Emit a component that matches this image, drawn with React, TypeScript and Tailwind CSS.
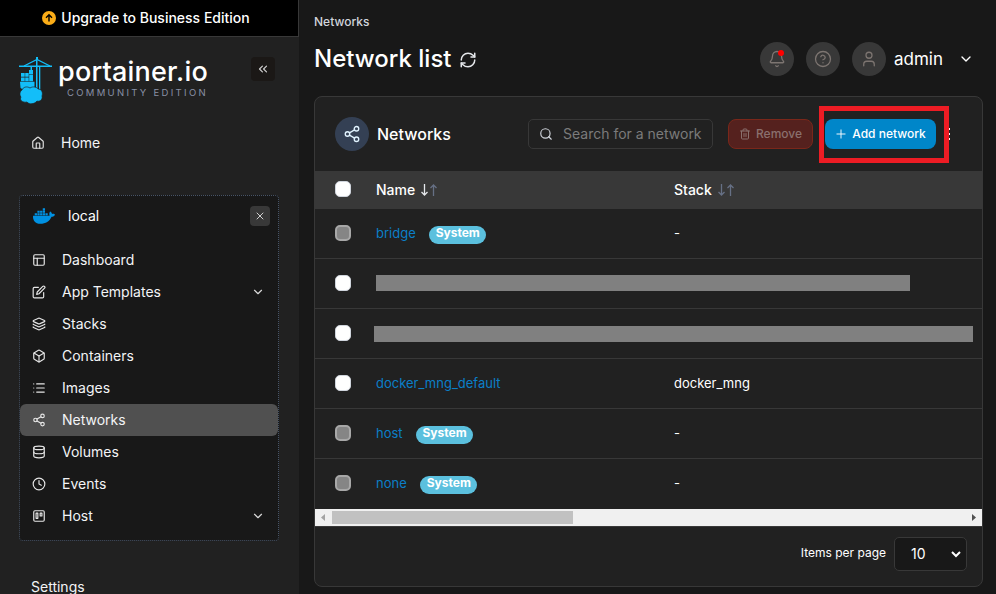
import {
    Bell, Box, ChevronDown, ChevronsLeft, CircleQuestionMark,
    Clock, Database, House, Layers, List, Plus, RefreshCw, Search, Share2, User, X,
} from "lucide-react";
import { FiEdit, FiLayout, FiTrash2, FiTrello } from "react-icons/fi";
import { FaDocker } from "react-icons/fa";

const menu = [
    { label: "Dashboard", icon: FiLayout },
    { label: "App Templates", icon: FiEdit, expandable: true },
    { label: "Stacks", icon: Layers },
    { label: "Containers", icon: Box },
    { label: "Images", icon: List },
    { label: "Networks", icon: Share2, active: true },
    { label: "Volumes", icon: Database },
    { label: "Events", icon: Clock },
    { label: "Host", icon: FiTrello, expandable: true },
];

const networks = [
    { id: 1, name: "bridge", system: true, stack: "-" },
    { id: 2, redacted: "ml-0 -mt-px w-[534px]" },
    { id: 3, redacted: "-ml-0.5 mt-px w-[599px]" },
    { id: 4, name: "docker_mng_default", stack: "docker_mng" },
    { id: 5, name: "host", system: true, stack: "-" },
    { id: 6, name: "none", system: true, stack: "-" },
];

function Logo() {
    return (
        <div className="flex h-12 items-start">
            <svg className="h-[47px] w-[34px]" viewBox="0 0 34 47" fill="#13bef9">
                <path d="M17 0h2v3h-2zM0 8.500h33v1.500H0z" />
                <path d="M5 9L18 2.500 31 9" fill="none" stroke="#13bef9" strokeWidth="1.3" />
                <path d="M17 3h1.500v29H17zM20 9h1.300v23H20zM11.500 10h1.500v5h-1.500zM10 13h4v4h-4z" />
                <path d="M2 16h3.700v3.800H2zM6.200 16h3.500v3.800H6.200zM2 20.400h3.700v3.800H2zM6.200 20.400h3.500v3.800H6.200zM10.200 17.500h3.800v6.700h-3.800z" />
                <path d="M1 24.800h14.500v6c-2 3-12 3-14 0z" />
                <path
                    d="M3 33c1-3 5-4 8-2 3-2 7-1 8 1 4 0 5 4 4 7 1 4-3 6-5 5-2 3-8 4-10 1-4 1-8-2-6-5-2-2-1-6 1-7z"
                    stroke="#212121"
                    strokeWidth="0.7"
                />
            </svg>
            <div className="flex flex-col pl-[5px]">
                <span className="mt-px h-7 text-[27px] leading-7 font-medium tracking-[0.200px] whitespace-nowrap text-white">portainer.io</span>
                <span className="mt-px pl-[9px] text-[9.500px] leading-3 tracking-[2.300px] whitespace-nowrap text-[#8890a5]">COMMUNITY EDITION</span>
            </div>
        </div>
    );
}

function Sidebar() {
    return (
        <aside className="flex w-[299px] shrink-0 flex-col bg-[#212121]">
            <div className="flex h-[37px] shrink-0 items-center justify-center gap-[5px] border-r border-b border-[#383838] bg-black pr-[6px] text-sm font-medium text-white">
                <svg className="h-3.5 w-3.5" viewBox="0 0 14 14">
                    <circle cx="7" cy="7" r="7" fill="#fbad18" />
                    <path d="M7 10.500V4M4 6.800l3-3 3 3" fill="none" stroke="#000" strokeWidth="1.4" />
                </svg>
                <span>Upgrade to Business Edition</span>
            </div>

            <div className="mt-5 flex items-start justify-between pr-6 pl-[19px]">
                <Logo />
                <button className="flex h-6 w-6 items-center justify-center rounded bg-[#1b1816] text-[#d0d0d0]">
                    <ChevronsLeft className="h-3.5 w-3.5" />
                </button>
            </div>

            <div className="mt-[22px] flex h-8 shrink-0 items-center pl-[31px] text-sm text-gray-100">
                <House className="h-3.5 w-3.5 text-[#e0e0e0]" />
                <span className="ml-4">Home</span>
            </div>

            <div className="mt-9 mr-5 ml-[19px] h-[346px] shrink-0 rounded border border-dotted border-[#475467] bg-[#181818]">
                <div className="flex h-10 items-center pr-2 pl-[13px]">
                    <FaDocker className="h-[22px] w-[22px] text-[#0091e2]" />
                    <span className="ml-[13px] text-sm text-white">local</span>
                    <button className="ml-auto flex h-5 w-5 items-center justify-center rounded bg-[#383838] text-[#d0d0d0]">
                        <X className="h-3 w-3" />
                    </button>
                </div>
                <ul className="mt-2">
                    {menu.map(({ label, icon: Icon, active, expandable }) => (
                        <li
                            key={label}
                            className={`flex h-8 items-center rounded-md pr-[13px] pl-3 text-sm text-gray-100 ${active ? "bg-[#505050]" : ""}`}
                        >
                            <Icon className="h-3.5 w-3.5 text-[#e6e6e6]" />
                            <span className="ml-4">{label}</span>
                            {expandable && <ChevronDown className="ml-auto h-3.5 w-3.5 text-[#d8d8d8]" />}
                        </li>
                    ))}
                </ul>
            </div>

            <div className="mt-9 pl-[31px] text-sm text-gray-100">Settings</div>
        </aside>
    );
}

function PageHeader() {
    return (
        <header>
            <div className="pt-3 text-xs leading-5 font-medium text-gray-300">Networks</div>
            <div className="mt-2.5 flex h-[34px] items-center">
                <h1 className="text-2xl font-medium whitespace-nowrap text-white">Network list</h1>
                <RefreshCw className="mt-0.5 ml-2 h-[18px] w-[18px] text-gray-200" />
                <div className="ml-auto flex items-center gap-3 text-[#7d7571]">
                    <div className="relative flex h-[34px] w-[34px] items-center justify-center rounded-full bg-[#383838]">
                        <Bell className="h-[18px] w-[18px]" strokeWidth={1.7} />
                        <span className="absolute top-2 right-2.5 h-1.5 w-1.5 rounded-full bg-[#ff0000]" />
                    </div>
                    <div className="flex h-[34px] w-[34px] items-center justify-center rounded-full bg-[#383838]">
                        <CircleQuestionMark className="h-[18px] w-[18px]" strokeWidth={1.7} />
                    </div>
                    <div className="flex h-[34px] w-[34px] items-center justify-center rounded-full bg-[#383838]">
                        <User className="h-[18px] w-[18px]" strokeWidth={1.7} />
                    </div>
                </div>
                <span className="ml-2 w-[49px] text-[17px] leading-none whitespace-nowrap text-white">admin</span>
                <ChevronDown className="mr-[9px] ml-[15px] h-4 w-4 text-white" />
            </div>
        </header>
    );
}

function Checkbox({ disabled = false }: { disabled?: boolean }) {
    return (
        <span
            className={`mb-0.5 h-4 w-4 shrink-0 rounded-[5px] ${disabled ? "border-2 border-[#a8a8a8] bg-[#858585]" : "border border-[#d0d5dd] bg-white"}`}
        />
    );
}

function SortIcons({ active = false }: { active?: boolean }) {
    return (
        <svg className="ml-1.5 h-3 w-4" viewBox="0 0 16 12" fill="none" strokeWidth="1.3">
            <path d="M3.500 0v11M0.500 8l3 3 3-3" className={active ? "stroke-gray-200" : "stroke-[#667085]"} />
            <path d="M12.500 12V1M9.500 4l3-3 3 3" className="stroke-[#667085]" />
        </svg>
    );
}

function NetworkTable() {
    return (
        <div>
            <div className="flex h-[38px] items-center bg-[#383838] pl-5 text-sm font-medium text-white">
                <Checkbox />
                <div className="ml-[25px] flex w-[298px] items-center">
                    Name <SortIcons active />
                </div>
                <div className="flex items-center">
                    Stack <SortIcons />
                </div>
            </div>
            {networks.map((n) => (
                <div key={n.id} className="flex h-[50px] items-center border-b border-[#383838] pl-5 text-[13px] last:border-b-0">
                    <Checkbox disabled={n.system} />
                    {n.redacted ? (
                        <div className="ml-[25px]">
                            <div className={`h-4 bg-[#808080] ${n.redacted}`} />
                        </div>
                    ) : (
                        <>
                            <div className="ml-[25px] flex w-[298px] items-center text-[#0b7fc8]">
                                {n.name}
                                {n.system && (
                                    <span className="mt-0.5 ml-[13.500px] h-[18px] w-[57px] rounded-full bg-[#5bc0de] text-center text-[12px] leading-[14px] font-bold text-white">
                                        System
                                    </span>
                                )}
                            </div>
                            <div className="text-white">{n.stack}</div>
                        </>
                    )}
                </div>
            ))}
        </div>
    );
}

export default function App() {
    return (
        <div className="flex h-[594px] w-[996px] overflow-hidden bg-[#181818] font-['Inter',sans-serif]">
            <Sidebar />
            <main className="flex-1 pr-[13px] pl-[15px]">
                <PageHeader />

                <section className="mt-5 h-[491px] rounded-lg border border-[#383838] bg-[#212121]">
                    <div className="flex h-[74px] items-center pl-5">
                        <div className="flex h-[34px] w-[34px] items-center justify-center rounded-full bg-[#344054] text-[#e0f2fe]">
                            <Share2 className="h-[18px] w-[18px]" strokeWidth={1.8} />
                        </div>
                        <h2 className="ml-2 text-base font-medium text-white">Networks</h2>
                        <div className="ml-auto flex h-[30px] w-[185px] items-center rounded-[5px] border border-[#383838] pl-2.5 text-sm text-[#7b7b7b]">
                            <Search className="h-3.5 w-3.5 shrink-0 text-gray-300" />
                            <span className="ml-2.5 whitespace-nowrap">Search for a network</span>
                        </div>
                        <button className="ml-[15px] flex h-[30px] w-[85px] items-center justify-center gap-[5px] rounded-lg border border-[#7a271a] bg-[#55211e] text-xs font-medium text-[#8a706e]">
                            <FiTrash2 className="h-3 w-3" />
                            Remove
                        </button>
                        {/* highlighted action */}
                        <div className="relative ml-3 flex">
                            <button className="flex h-[30px] w-[111px] items-center justify-center gap-1 rounded-lg bg-[#0086c9] pr-px text-xs font-medium text-white">
                                <Plus className="h-3.5 w-3.5" strokeWidth={1.6} />
                                Add network
                            </button>
                            <div className="absolute -top-[13px] -left-1.5 h-[57px] w-[130px] border-5 border-[#ed1c24]" />
                        </div>
                        <div className="mr-8 ml-3 flex w-[2px] flex-col gap-[3px]">
                            <span className="h-0.5 w-0.5 bg-white" />
                            <span className="h-0.5 w-0.5 bg-white" />
                            <span className="h-0.5 w-0.5 bg-white" />
                        </div>
                    </div>

                    <NetworkTable />

                    <div className="flex h-[17px] items-center bg-[#f0f0f0]">
                        <svg className="h-[17px] w-[17px] shrink-0" viewBox="0 0 17 17">
                            <path d="M10 5v7L6 8.500z" fill="#a3a3a3" />
                        </svg>
                        <div className="h-[13px] w-[241px] bg-[#c1c1c1]" />
                        <svg className="ml-auto h-[17px] w-[17px] shrink-0" viewBox="0 0 17 17">
                            <path d="M7 5v7l4-3.500z" fill="#505050" />
                        </svg>
                    </div>

                    <div className="flex h-[54px] items-center justify-end border-t border-[#383838] pr-[15px] text-xs text-white">
                        <span className="mb-0.5">Items per page</span>
                        <div className="ml-2 flex h-[34px] w-[73px] items-center justify-between rounded-[5px] border border-[#383838] bg-[#181818] pr-1 pl-4 text-sm">
                            10
                            <svg className="h-3 w-3" viewBox="0 0 12 12" fill="none" stroke="white" strokeWidth="2">
                                <path d="M2 4l4 4 4-4" />
                            </svg>
                        </div>
                    </div>
                </section>
            </main>
        </div>
    );
}
